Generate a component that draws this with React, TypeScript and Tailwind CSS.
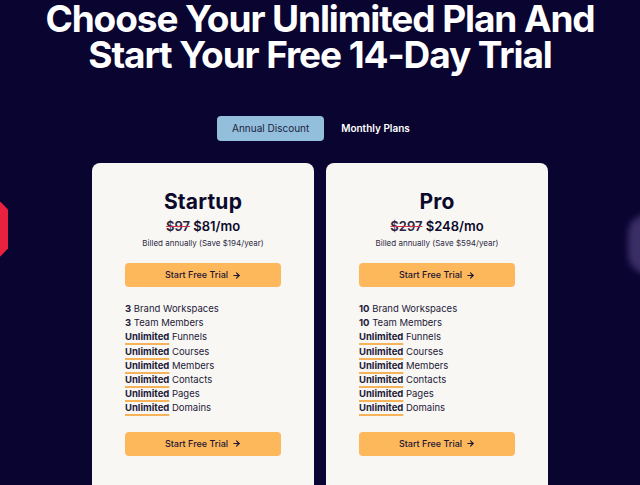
import React from 'react';
import { ArrowRight } from 'lucide-react';

type Plan = {
  name: string;
  oldPrice: string;
  price: string;
  billed: string;
  workspaces: string;
};

const plans: Plan[] = [
  { name: 'Startup', oldPrice: '$97', price: '$81/mo', billed: 'Billed annually (Save $194/year)', workspaces: '3' },
  { name: 'Pro', oldPrice: '$297', price: '$248/mo', billed: 'Billed annually (Save $594/year)', workspaces: '10' },
];

const unlimited = ['Funnels', 'Courses', 'Members', 'Contacts', 'Pages', 'Domains'];

const TrialButton: React.FC = () => (
  <button className="w-full h-[24px] rounded-[4px] bg-[#fdb85c] text-[#1d1633] text-[9px] font-medium flex items-center justify-center gap-1">
    Start Free Trial
    <ArrowRight size={9} strokeWidth={3} />
  </button>
);

const PlanCard: React.FC<{ plan: Plan }> = ({ plan }) => (
  <div className="w-[222px] h-[340px] rounded-[8px] bg-[#f8f7f3] px-[33px] pt-[26px] text-[#0c0a2c]">
    <h2 className="text-center text-[21px] leading-[26px] font-bold tracking-[0.01em]">{plan.name}</h2>
    <p className="text-center text-[13px] leading-[18px] font-semibold mt-[2px]">
      <span className="line-through decoration-[#d6304f] text-[#2a2440]">{plan.oldPrice}</span> {plan.price}
    </p>
    <p className="text-center text-[8px] leading-[14px] text-[#2d2a45] mt-[1px]">{plan.billed}</p>
    <div className="mt-[13px]">
      <TrialButton />
    </div>
    <ul className="mt-[15px] text-[9.5px] leading-[14.2px] text-[#1d1a3a]">
      <li><b className="font-bold">{plan.workspaces}</b> Brand Workspaces</li>
      <li><b className="font-bold">{plan.workspaces}</b> Team Members</li>
      {unlimited.map((u) => (
        <li key={u}>
          <b className="font-bold underline decoration-[#f7b35a] decoration-[1.5px] underline-offset-[3px]">Unlimited</b> {u}
        </li>
      ))}
    </ul>
    <div className="mt-[16px]">
      <TrialButton />
    </div>
  </div>
);

export default function App() {
  return (
    <div className="relative w-full h-[485px] overflow-hidden bg-[#0a0431] font-['Inter',sans-serif]">
      <div className="absolute left-[-22px] top-[194px] w-[30px] h-[70px] bg-[#e8213f] [clip-path:polygon(50%_0,100%_22%,100%_78%,50%_100%,0_78%,0_22%)]" />
      <div className="absolute right-[-28px] top-[214px] w-[40px] h-[60px] rounded-full bg-[#5a4a8a] opacity-60 blur-[3px]" />

      <h1 className="pt-[1px] text-center text-white text-[37px] leading-[36px] font-bold tracking-[-0.03em]">
        Choose Your Unlimited Plan And
        <br />
        Start Your Free 14-Day Trial
      </h1>

      <div className="mt-[43px] flex justify-center items-center gap-[17px] pr-[13px]">
        <div className="w-[107px] h-[25px] rounded-[4px] bg-[#93bfdc] text-[#1b2340] text-[10px] flex items-center justify-center">
          Annual Discount
        </div>
        <div className="text-white text-[10px] font-semibold">Monthly Plans</div>
      </div>

      <div className="mt-[22px] flex justify-center gap-[12px]">
        {plans.map((p) => (
          <PlanCard key={p.name} plan={p} />
        ))}
      </div>
    </div>
  );
}
